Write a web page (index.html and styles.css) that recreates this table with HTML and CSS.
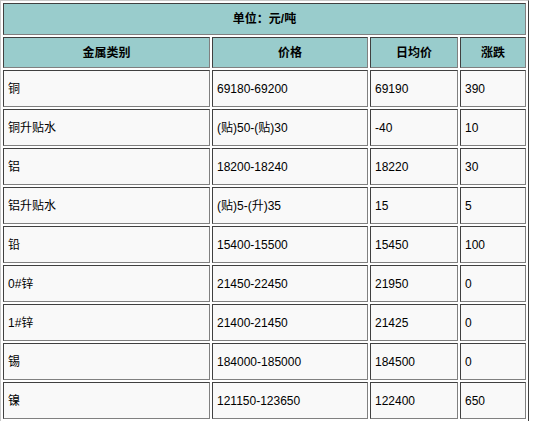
FILE: index.html
```html
<!DOCTYPE html>
<html lang="zh">
<head>
<meta charset="utf-8">
<title>金属价格</title>
<link rel="stylesheet" href="styles.css">
</head>
<body>
<table class="price-table">
  <thead>
    <tr class="unit-row"><th colspan="4">单位：元/吨</th></tr>
    <tr class="head-row">
      <th class="c1">金属类别</th>
      <th class="c2">价格</th>
      <th class="c3">日均价</th>
      <th class="c4">涨跌</th>
    </tr>
  </thead>
  <tbody>
    <tr><td>铜</td><td>69180-69200</td><td>69190</td><td>390</td></tr>
    <tr><td>铜升贴水</td><td>(贴)50-(贴)30</td><td>-40</td><td>10</td></tr>
    <tr><td>铝</td><td>18200-18240</td><td>18220</td><td>30</td></tr>
    <tr><td>铝升贴水</td><td>(贴)5-(升)35</td><td>15</td><td>5</td></tr>
    <tr><td>铅</td><td>15400-15500</td><td>15450</td><td>100</td></tr>
    <tr><td>0#锌</td><td>21450-22450</td><td>21950</td><td>0</td></tr>
    <tr><td>1#锌</td><td>21400-21450</td><td>21425</td><td>0</td></tr>
    <tr><td>锡</td><td>184000-185000</td><td>184500</td><td>0</td></tr>
    <tr><td>镍</td><td>121150-123650</td><td>122400</td><td>650</td></tr>
  </tbody>
</table>
</body>
</html>
```

FILE: styles.css
```css
html, body {
  margin: 0;
  padding: 0;
  background: #ffffff;
}

body {
  font-family: "Liberation Sans", "Noto Sans CJK SC", sans-serif;
  font-size: 12px;
  color: #000000;
}

.price-table {
  border-collapse: separate;
  border-spacing: 2px;
  border-style: solid;
  border-width: 1px;
  border-color: #c8c8c8 #404040 #404040 #c8c8c8;
}

.price-table th,
.price-table td {
  box-sizing: border-box;
  border-style: solid;
  border-width: 1px;
  border-color: #404040 #808080 #808080 #404040;
  padding: 0 4px;
  vertical-align: middle;
  line-height: 14px;
}

.price-table th {
  background: #99cccc;
  font-weight: bold;
  text-align: center;
}

.unit-row th {
  height: 32px;
}

.head-row th {
  height: 31px;
}

.c1 { width: 207px; }
.c2 { width: 156px; }
.c3 { width: 88px; }
.c4 { width: 66px; }

.price-table td {
  background: #f9f9f9;
  text-align: left;
  height: 37px;
  white-space: nowrap;
}
```
